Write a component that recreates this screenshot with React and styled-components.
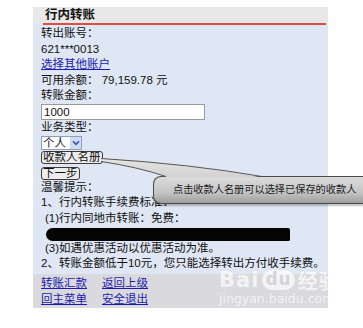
import React from "react";
import styled, { createGlobalStyle } from "styled-components";

const Global = createGlobalStyle`
  html, body { margin: 0; padding: 0; background: #fff; }
  body { width: 363px; height: 328px; overflow: hidden; position: relative;
    font-family: "Liberation Sans", "Noto Sans CJK SC", sans-serif; }
`;

const Page = styled.div`
  padding: 7px 0 0 33px;
  position: relative;
`;

const Panel = styled.div`
  width: 295px;
  background: #dee7f3;
  color: #111;
  font-size: 11.5px;
`;

const Header = styled.div`
  background: #e8e8e8;
  height: 16px;
  line-height: 17px;
  padding-left: 12px;
  font-weight: bold;
  font-size: 12.5px;
  color: #111;
`;

const RedLine = styled.div`
  height: 2px;
  margin: 0 2px 0 10px;
  background: #d9503f;
`;

const Body = styled.div`
  padding: 1px 0 2px 8px;
`;

const Line = styled.div`
  height: 15.5px;
  line-height: 15.5px;
  white-space: nowrap;
  padding-left: ${(p) => (p.$indent ? "4px" : "0")};
`;

const Link = styled.a`
  color: #1c1cb0;
  text-decoration: underline;
  cursor: pointer;
`;

const Input = styled.div`
  box-sizing: border-box;
  width: 164px;
  height: 16px;
  border: 1px solid #9a9a9a;
  background: #fff;
  line-height: 14px;
  padding-left: 2px;
`;

const Select = styled.div`
  box-sizing: border-box;
  margin-top: 0.5px;
  width: 41px;
  height: 14px;
  border: 1px solid #8e9fb8;
  background: #fff;
  display: flex;
  align-items: center;
  line-height: 12px;
`;

const SelectText = styled.span`
  flex: 1;
  padding-left: 1px;
`;

const SelectArrow = styled.span`
  width: 11px;
  height: 12px;
  background: #cfdcf3;
  display: flex;
  align-items: center;
  justify-content: center;
`;

const Button = styled.div`
  box-sizing: border-box;
  display: inline-block;
  height: 13px;
  line-height: 11px;
  padding: 0 1px;
  border: 1px solid #3a3a3a;
  border-radius: 3px;
  background: #ececec;
  margin-top: ${(p) => p.$mt || 0}px;
`;

const ButtonRow = styled.div`
  height: ${(p) => p.$h}px;
`;

const Redacted = styled.div`
  margin: 1.5px 0 0 5px;
  width: 244px;
  height: 13px;
  background: #050505;
  border-radius: 7px 2px 2px 7px;
`;

const Footer = styled.div`
  background: #d9d9de;
  padding: 1px 0 1px 8px;
`;

const FooterRow = styled.div`
  display: flex;
  gap: 15px;
  height: 16px;
  line-height: 16px;
`;

const Callout = styled.div`
  position: absolute;
  left: 153px;
  top: 176px;
  width: 210px;
  height: 28px;
  box-sizing: border-box;
  border: 1px solid #4a4a4a;
  border-right: none;
  border-radius: 8px 0 0 8px;
  background: linear-gradient(#dcdcdc, #c4c4c4 60%, #9e9e9e);
  box-shadow: 1px 2px 2px rgba(0, 0, 0, 0.25);
  padding-left: 19px;
  line-height: 26px;
  font-size: 10.2px;
  color: #1a1a1a;
  white-space: nowrap;
  overflow: hidden;
`;

const Tail = styled.svg`
  position: absolute;
  left: 0;
  top: 0;
  pointer-events: none;
`;

const Watermark = styled.div`
  position: absolute;
  left: 219px;
  top: 268px;
  color: rgba(255, 255, 255, 0.7);
  white-space: nowrap;
  pointer-events: none;
`;

const WmTop = styled.div`
  display: flex;
  align-items: center;
  height: 24px;
  font-family: "DejaVu Sans", sans-serif;
  font-weight: bold;
  font-size: 21px;
  letter-spacing: 1px;
`;

const Paw = styled.span`
  display: inline-block;
  margin: 0 3px;
  padding: 0 3px;
  height: 20px;
  line-height: 19px;
  border-radius: 10px;
  background: rgba(255, 255, 255, 0.7);
  color: #d4d4da;
  font-size: 17px;
`;

const WmCn = styled.span`
  font-family: "Noto Sans CJK SC", sans-serif;
  font-size: 20px;
  font-weight: bold;
`;

const WmBottom = styled.div`
  font-family: "DejaVu Sans", sans-serif;
  font-size: 12.5px;
  line-height: 14px;
`;

export default function App() {
  return (
    <>
      <Global />
      <Page>
        <Panel>
          <Header>行内转账</Header>
          <RedLine />
          <Body>
            <Line>转出账号：</Line>
            <Line>621***0013</Line>
            <Line><Link>选择其他账户</Link></Line>
            <Line>可用余额： 79,159.78 元</Line>
            <Line>转账金额：</Line>
            <Input>1000</Input>
            <Line>业务类型：</Line>
            <Select>
              <SelectText>个人</SelectText>
              <SelectArrow>
                <svg width="8" height="6" viewBox="0 0 8 6">
                  <path d="M1 1.2 L4 4.3 L7 1.2" fill="none" stroke="#2f56b8" strokeWidth="1.6" />
                </svg>
              </SelectArrow>
            </Select>
            <ButtonRow $h={17}><Button $mt={1}>收款人名册</Button></ButtonRow>
            <ButtonRow $h={13}><Button>下一步</Button></ButtonRow>
            <Line>温馨提示：</Line>
            <Line>1、行内转账手续费标准：</Line>
            <Line $indent>(1)行内同地市转账：免费：</Line>
            <Redacted />
            <Line $indent>(3)如遇优惠活动以优惠活动为准。</Line>
            <Line>2、转账金额低于10元，您只能选择转出方付收手续费。</Line>
          </Body>
          <Footer>
            <FooterRow><Link>转账汇款</Link><Link>返回上级</Link></FooterRow>
            <FooterRow><Link>回主菜单</Link><Link>安全退出</Link></FooterRow>
          </Footer>
        </Panel>
      </Page>
      <Callout>点击收款人名册可以选择已保存的收款人</Callout>
      <Tail width="363" height="328" viewBox="0 0 363 328">
        <defs>
          <linearGradient id="tailg" x1="0" y1="0" x2="0" y2="1">
            <stop offset="0" stopColor="#e4e4e4" />
            <stop offset="1" stopColor="#d2d2d2" />
          </linearGradient>
        </defs>
        <path d="M101 158.5 Q190 164 262 177.5 L168 177.5 Q138 167 101 161.5 Z" fill="url(#tailg)" />
        <path d="M101 158.5 Q190 164 262 176.5" fill="none" stroke="#555" strokeWidth="1" />
        <path d="M101 161.5 Q138 167 166 176.5" fill="none" stroke="#555" strokeWidth="1" />
      </Tail>
      <Watermark>
        <WmTop>Bai<Paw>du</Paw><WmCn>经验</WmCn></WmTop>
        <WmBottom>jingyan.baidu.com</WmBottom>
      </Watermark>
    </>
  );
}
